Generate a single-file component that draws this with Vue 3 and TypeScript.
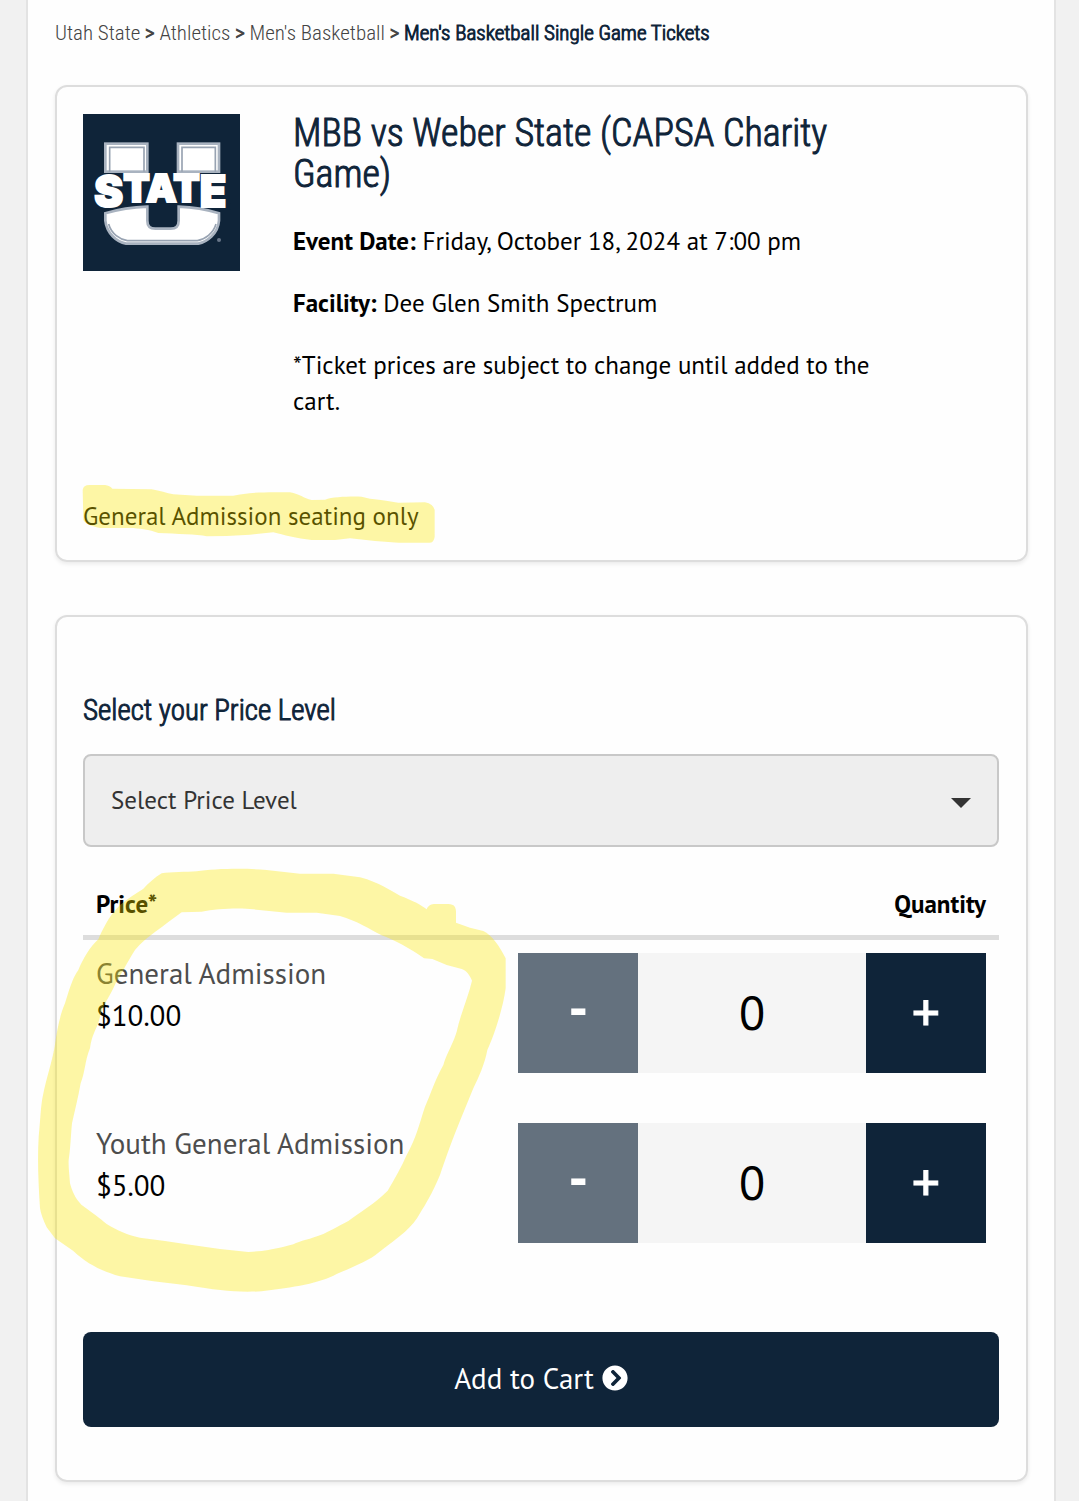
<script setup lang="ts">
import { ref } from 'vue'

interface Tier {
  id: string
  name: string
  price: string
  quantity: number
}

const crumbs: string[] = ['Utah State', 'Athletics', "Men's Basketball"]
const level = ref('')
const tiers = ref<Tier[]>([
  { id: 'general', name: 'General Admission', price: '$10.00', quantity: 0 },
  { id: 'youth', name: 'Youth General Admission', price: '$5.00', quantity: 0 },
])

function change(tier: Tier, step: number): void {
  tier.quantity = Math.max(0, tier.quantity + step)
}
</script>

<template>
  <main class="page">
    <nav class="crumbs" aria-label="Breadcrumb">
      <template v-for="crumb in crumbs" :key="crumb">
        <a href="#">{{ crumb }}</a><span class="sep"> &gt; </span>
      </template>
      <span class="current">Men's Basketball Single Game Tickets</span>
    </nav>

    <section class="card event">
      <div class="event-top">
        <svg class="logo" viewBox="39 42 471 471" role="img" aria-label="Utah State">
          <rect x="39" y="42" width="471" height="471" fill="#0f2439" />
          <g fill="#fff" stroke="#a9b3c0" stroke-width="8">
            <rect x="106" y="131" width="126" height="84" />
            <rect x="324" y="131" width="123" height="84" />
            <path d="M106 340 Q165 322 232 320 V362 Q232 386 256 386 H302 Q326 386 326 362 V320 Q390 322 447 340 V362 C444 402 410 426 385 431 H168 C140 426 110 400 106 362Z" />
          </g>
          <g fill="none" stroke="#98a3b2" stroke-width="5">
            <path d="M119 215 V142 H222 V215 M336 215 V142 H436 V215" />
            <path d="M116 372 C124 402 150 418 172 422 H382 C405 418 430 400 438 372" />
          </g>
          <path d="M60 222 H482 V330 Q390 310 271 310 T60 330Z" fill="#0f2439" />
          <text class="wordmark" x="271" y="321" text-anchor="middle"><tspan class="cap">S</tspan><tspan dy="-16">TAT</tspan><tspan class="cap" dy="16">E</tspan></text>
          <circle cx="447" cy="420" r="6" fill="#68768a" />
        </svg>
        <div class="details">
          <h1>MBB vs Weber State (CAPSA Charity Game)</h1>
          <p><strong>Event Date:</strong> Friday, October 18, 2024 at 7:00 pm</p>
          <p><strong>Facility:</strong> Dee Glen Smith Spectrum</p>
          <p>*Ticket prices are subject to change until added to the cart.</p>
        </div>
      </div>
      <p class="seating">General Admission seating only</p>
      <svg class="marker marker-line" viewBox="0 0 1260 330" aria-hidden="true">
        <path d="M98 60Q100 45 118 45L165 45Q180 47 187 56L305 58C330 62 350 70 370 73L440 77L550 77C590 68 640 65 720 67C750 72 760 85 785 90L825 89C850 80 900 79 935 80L960 86C1000 90 1020 94 1045 98L1125 97Q1150 102 1154 120L1154 200Q1152 218 1138 218L1045 218L975 213L900 205L855 210L785 210C740 205 700 195 670 187L600 194L530 198L470 199C440 192 380 192 325 189C300 180 280 177 250 174L150 174C120 168 105 160 100 150Z" />
      </svg>
    </section>

    <section class="card order">
      <label class="level-label" for="level">Select your Price Level</label>
      <div class="select-wrap">
        <select id="level" v-model="level">
          <option value="">Select Price Level</option>
        </select>
      </div>

      <table>
        <thead>
          <tr>
            <th scope="col">Price*</th>
            <th scope="col" class="qty">Quantity</th>
          </tr>
        </thead>
        <tbody>
          <tr v-for="tier in tiers" :key="tier.id">
            <td>
              <label class="tier" :for="tier.id">{{ tier.name }}</label>
              <span class="price">{{ tier.price }}</span>
            </td>
            <td class="qty">
              <div class="stepper">
                <button type="button" class="minus" @click="change(tier, -1)">-</button>
                <input :id="tier.id" v-model.number="tier.quantity" type="text" inputmode="numeric" />
                <button type="button" class="plus" @click="change(tier, 1)">+</button>
              </div>
            </td>
          </tr>
        </tbody>
      </table>

      <button type="button" class="add">
        <span>Add to Cart</span>
        <svg viewBox="0 0 512 512" aria-hidden="true">
          <path d="M256 8c137 0 248 111 248 248S393 504 256 504 8 393 8 256 119 8 256 8zm113.900 231L234.400 103.500c-9.400-9.400-24.600-9.400-33.900 0l-17 17c-9.400 9.400-9.400 24.600 0 33.900L285.100 256 183.500 357.600c-9.400 9.400-9.400 24.600 0 33.900l17 17c9.400 9.400 24.600 9.400 33.900 0L369.900 273c9.400-9.400 9.400-24.600 0-34z" />
        </svg>
      </button>

      <svg class="marker marker-circle" viewBox="0 0 1560 1380" aria-hidden="true">
        <path d="M425 70C450 66 500 66 530 64C580 56 680 54 740 60L840 71L940 71L1020 82C1080 98 1110 122 1140 137C1180 152 1205 165 1220 178C1225 165 1235 162 1245 162L1285 162C1305 162 1309 175 1308 190L1308 218L1350 233L1390 243C1415 255 1440 290 1457 325L1457 415C1450 470 1425 550 1402 600C1395 640 1375 685 1360 715L1325 800C1300 860 1275 930 1260 975C1235 1035 1215 1065 1200 1090C1180 1130 1140 1160 1075 1208C1050 1230 1000 1250 950 1272C900 1300 820 1312 725 1324C650 1328 600 1322 500 1306L400 1294L300 1279C240 1262 200 1240 160 1203L105 1165L80 1132C70 1110 62 1090 60 1075C55 1000 52 930 56 860C62 800 62 770 68 740C80 680 95 640 104 590C112 530 122 490 135 460C150 410 160 380 175 360C190 325 210 290 235 268C255 220 275 190 300 165C330 140 350 130 370 116C385 100 405 82 425 70ZM485 187L545 185C590 176 660 173 700 178L800 188L890 188L960 198C1010 212 1050 238 1085 256C1120 268 1170 295 1212 325L1237 327L1280 345L1325 357C1340 362 1350 377 1356 392C1345 440 1322 490 1310 545C1300 580 1280 610 1270 645C1245 690 1235 725 1215 770C1195 830 1190 860 1160 915C1145 950 1125 985 1103 1022C1060 1065 1020 1085 985 1113C950 1132 925 1145 910 1152C870 1168 840 1172 820 1183C780 1194 750 1200 725 1203L685 1206L600 1197L500 1183L435 1173L360 1163C320 1155 290 1140 260 1122C240 1105 220 1090 185 1065C165 1045 155 1020 150 1000C148 970 145 950 146 930C152 890 152 860 156 820C165 780 175 740 182 700C195 670 195 630 210 595C215 550 235 530 240 500C250 460 270 440 287 400C305 370 320 340 345 300C380 260 410 245 440 220Z" />
      </svg>
    </section>
  </main>
</template>

<style>
body {
  margin: 0;
  background: #f1f1f1;
}
</style>

<style scoped>
* {
  box-sizing: border-box;
}

.page {
  margin: 0 23px 0 26px;
  padding: 15px 26px 19px 27px;
  border: solid #e3e3e3;
  border-width: 0 2px;
  background: #fefefe;
  color: #000;
  font: 25px/36px 'PT Sans', 'Noto Sans', sans-serif;
}

.crumbs {
  font: 300 21px/36px 'Roboto Condensed', 'Liberation Sans Narrow', sans-serif;
  color: #444;
}

.crumbs a {
  color: inherit;
  text-decoration: none;
}

.sep {
  -webkit-text-stroke: 1px #444;
}

.current {
  color: #0f2439;
  -webkit-text-stroke: 1px #0f2439;
}

.card {
  position: relative;
  border: 2px solid #ddd;
  border-radius: 12px;
  box-shadow: 0 2px 4px rgba(0, 0, 0, 0.08);
}

.event {
  margin-top: 34px;
  padding: 26px 27px 26px 26px;
}

.event-top {
  display: flex;
  align-items: flex-start;
  gap: 53px;
}

.logo {
  flex: none;
  width: 157px;
  height: 157px;
  margin-top: 1px;
}

.wordmark {
  font: 900 116px Inter, sans-serif;
  fill: #fff;
  stroke: #fff;
  stroke-width: 6px;
}

.cap {
  font-size: 130px;
}

.details {
  flex: 1;
  padding-right: 88px;
}

h1,
.level-label {
  margin: 0;
  font: 300 38px/41px 'Roboto Condensed', 'Liberation Sans Narrow', sans-serif;
  color: #0f2439;
  -webkit-text-stroke: 1px #0f2439;
}

h1 {
  margin-bottom: 28px;
}

p {
  margin: 0 0 26px;
}

.seating {
  margin: 53px 0 0;
}

.marker {
  position: absolute;
  pointer-events: none;
  fill: rgba(253, 232, 0, 0.35);
  fill-rule: evenodd;
}

.marker-line {
  left: -7px;
  top: 383px;
  width: 420px;
}

.marker-circle {
  left: -37px;
  top: 233px;
  width: 520px;
}

.order {
  margin-top: 53px;
  padding: 73px 27px 53px 26px;
}

.level-label {
  display: block;
  font-size: 29px;
}

.select-wrap {
  position: relative;
  margin-top: 23px;
}

.select-wrap::after {
  content: '';
  position: absolute;
  right: 28px;
  top: 44px;
  border: 10px solid transparent;
  border-top-color: #333;
  border-bottom: 0;
  pointer-events: none;
}

select {
  display: block;
  appearance: none;
  width: 100%;
  height: 93px;
  padding: 0 26px 2px;
  border: 2px solid #c8c8c8;
  border-radius: 8px;
  background: #eee;
  color: #333;
  font: inherit;
}

table {
  width: 100%;
  margin-top: 26px;
  border-collapse: separate;
  border-spacing: 0;
  table-layout: fixed;
}

th {
  padding: 13px;
  border-bottom: 5px solid #ddd;
  text-align: left;
}

th.qty {
  width: 54%;
  text-align: right;
}

td {
  padding: 12px 13px 37px;
  vertical-align: top;
  font-size: 29px;
  line-height: 42px;
}

td.qty {
  padding-top: 13px;
  padding-left: 14px;
}

.tier,
.price {
  display: block;
}

.tier {
  color: #4d4d4d;
}

.stepper {
  display: flex;
  height: 120px;
}

.stepper button {
  flex: none;
  width: 120px;
  padding: 0 0 4px;
  border: 0;
  background: #0f2439;
  color: #fff;
  font: 56px/64px 'PT Sans', 'Noto Sans', sans-serif;
}

.stepper .plus {
  -webkit-text-stroke: 1px #fff;
}

.stepper .minus {
  padding-bottom: 12px;
  background: #64717e;
  font-weight: 700;
}

.stepper input {
  flex: 1;
  min-width: 0;
  padding: 0 0 2px;
  border: 0;
  background: #f5f5f5;
  color: #000;
  font: 48px/64px 'PT Sans', 'Noto Sans', sans-serif;
  text-align: center;
}

.add {
  display: flex;
  align-items: center;
  justify-content: center;
  gap: 8px;
  width: 100%;
  height: 95px;
  margin-top: 52px;
  padding: 0 0 3px;
  border: 0;
  border-radius: 8px;
  background: #0f2439;
  color: #fff;
  font: 29px/42px 'PT Sans', 'Noto Sans', sans-serif;
}

.add svg {
  width: 26px;
  height: 26px;
  fill: #fff;
}
</style>
